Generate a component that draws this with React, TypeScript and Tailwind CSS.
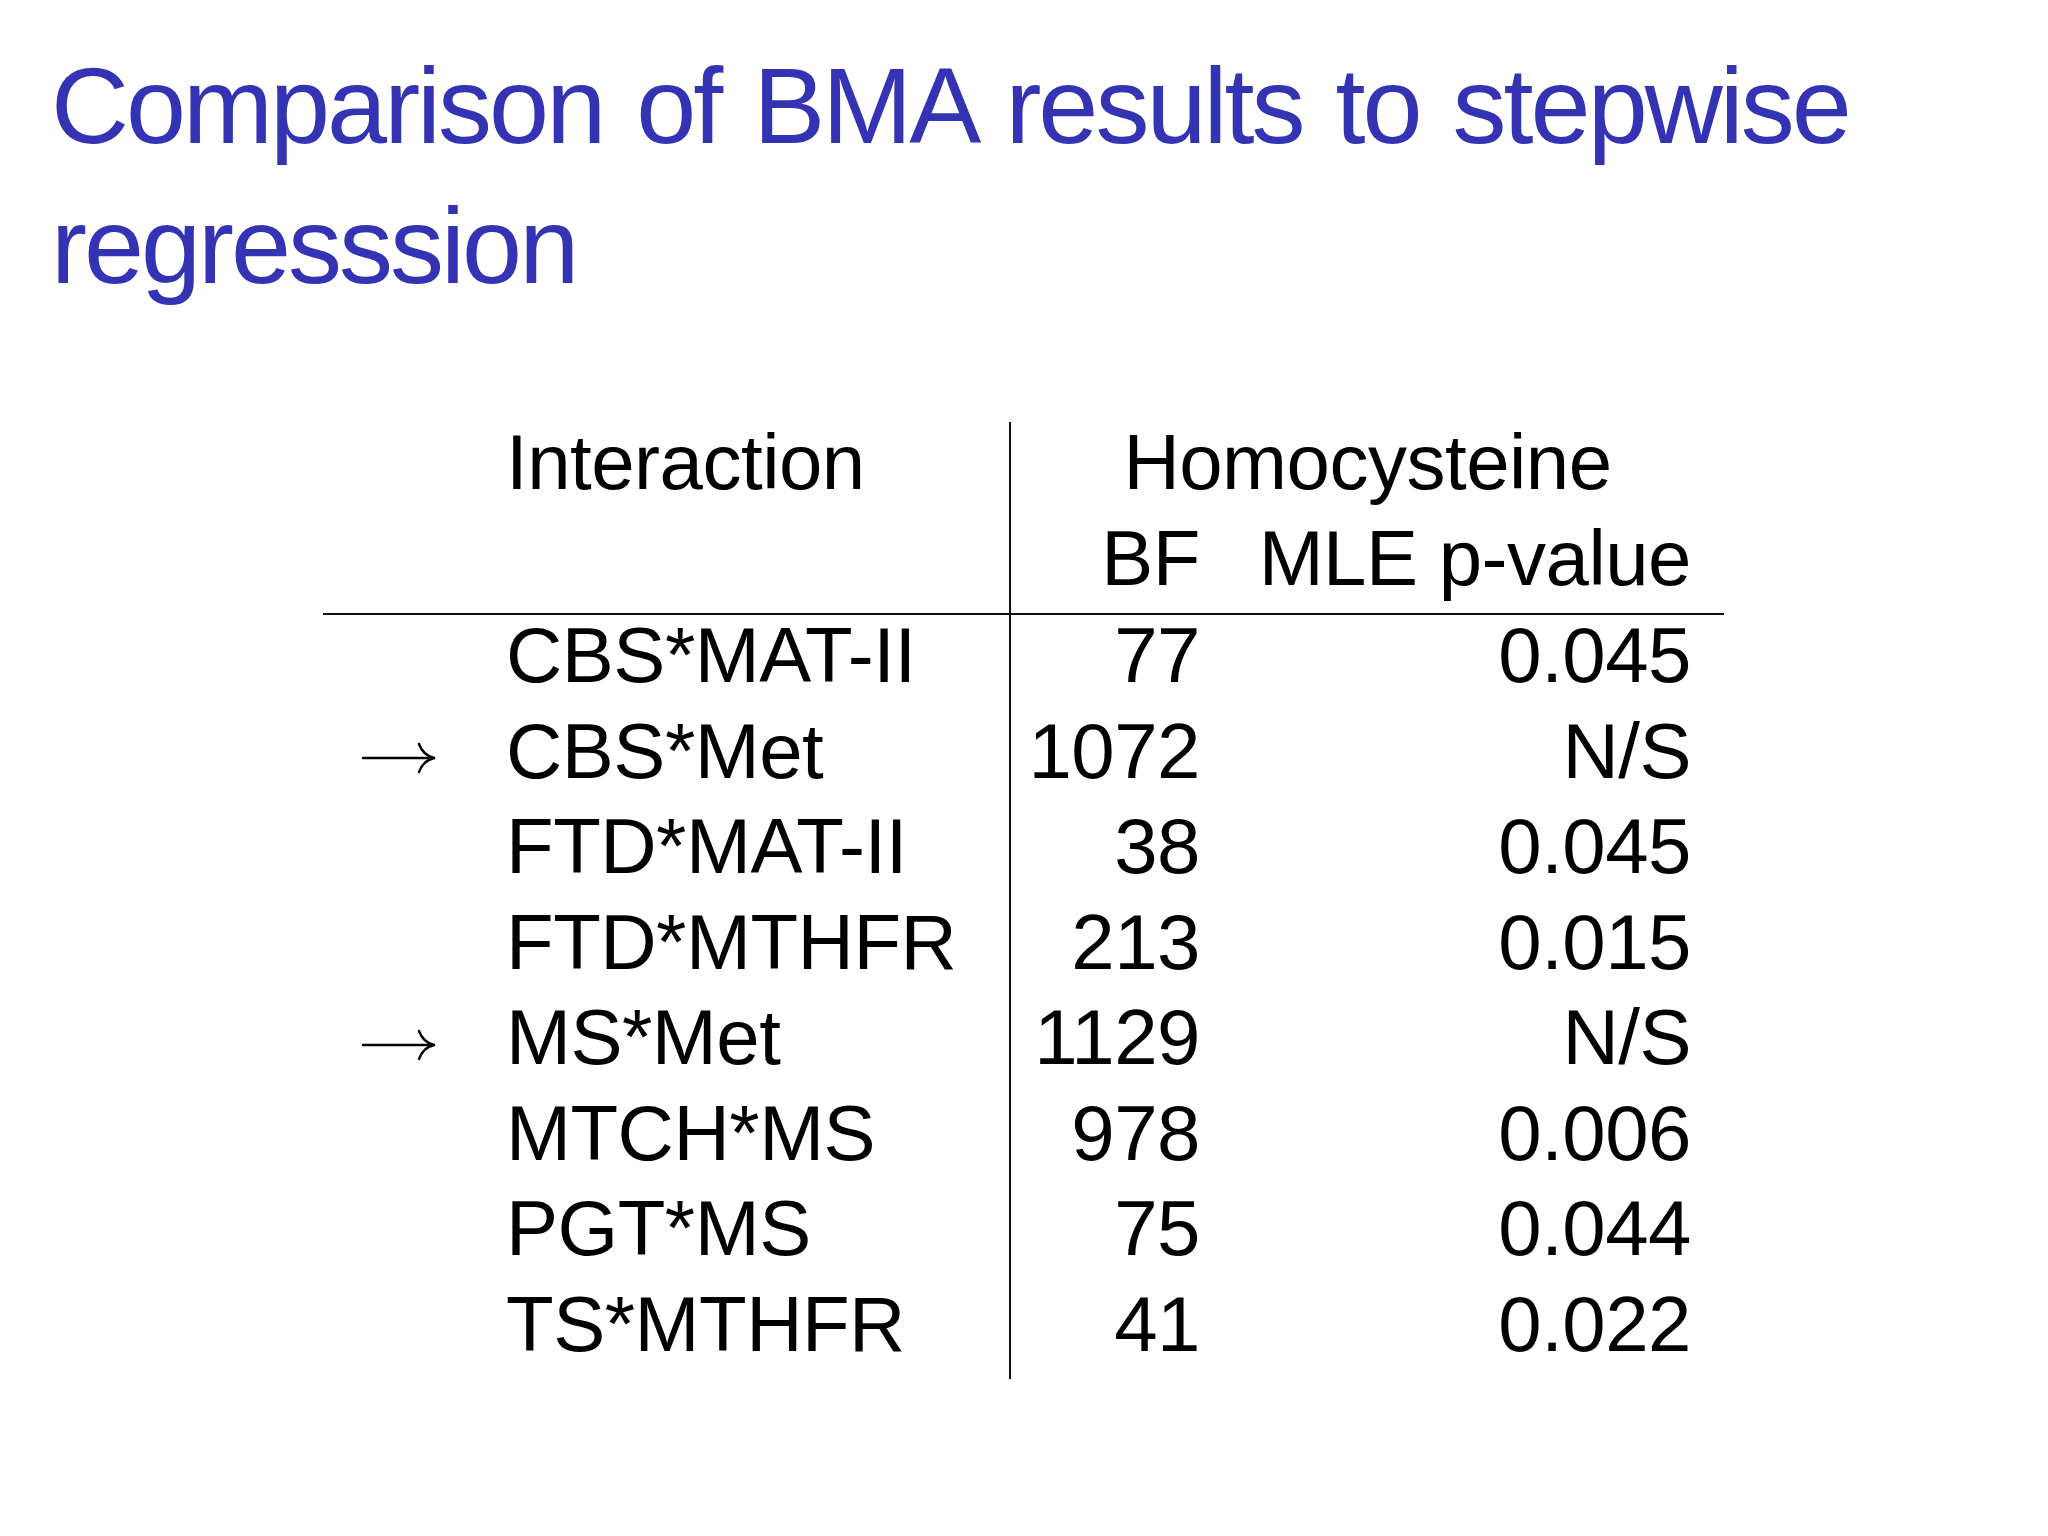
import React from "react";

const rows: { arrow?: boolean; name: string; bf: string; p: string }[] = [
  { name: "CBS*MAT-II", bf: "77", p: "0.045" },
  { arrow: true, name: "CBS*Met", bf: "1072", p: "N/S" },
  { name: "FTD*MAT-II", bf: "38", p: "0.045" },
  { name: "FTD*MTHFR", bf: "213", p: "0.015" },
  { arrow: true, name: "MS*Met", bf: "1129", p: "N/S" },
  { name: "MTCH*MS", bf: "978", p: "0.006" },
  { name: "PGT*MS", bf: "75", p: "0.044" },
  { name: "TS*MTHFR", bf: "41", p: "0.022" },
];

function Arrow() {
  return (
    <svg width="76" height="32" viewBox="0 0 76 32" fill="none" stroke="#000" strokeWidth="2.4" strokeLinecap="round">
      <path d="M3 16H73" />
      <path d="M59 2C61.5 9 66 14 74 16" />
      <path d="M59 30C61.5 23 66 18 74 16" />
    </svg>
  );
}

const cell = "h-[95.5px] leading-[81px] whitespace-nowrap";

export default function App() {
  return (
    <div className="w-[2048px] h-[1536px] bg-white overflow-hidden font-['Liberation_Sans',Arial,sans-serif]">
      <h1 className="w-[1990px] pl-[51px] pt-[36px] text-[108px] leading-[140px] tracking-[-3px] [word-spacing:6px] text-[#3333b3] font-normal">
        Comparison of BMA results to stepwise regresssion
      </h1>
      <div className="ml-[323px] mt-[106px] grid grid-cols-[148px_538px_225px_490px] text-[78px] tracking-[-0.5px] text-black">
        {/* header row 1 */}
        <div className={cell}></div>
        <div className={`${cell} pl-[35px]`}>Interaction</div>
        <div className={`${cell} col-span-2 border-l-2 border-[#111] text-center`}>Homocysteine</div>
        {/* header row 2 */}
        <div className={cell}></div>
        <div className={cell}></div>
        <div className={`${cell} border-l-2 border-[#111] text-right pr-[34px]`}>BF</div>
        <div className={`${cell} text-right pr-[33px]`}>MLE p-value</div>
        {/* rule */}
        <div className="col-span-4 h-[2px] bg-[#111]"></div>
        {rows.map((r) => (
          <React.Fragment key={r.name}>
            <div className={`${cell} pl-[37px] flex items-center`}>{r.arrow ? <Arrow /> : null}</div>
            <div className={`${cell} pl-[35px]`}>{r.name}</div>
            <div className={`${cell} border-l-2 border-[#111] text-right pr-[34px]`}>{r.bf}</div>
            <div className={`${cell} text-right pr-[33px]`}>{r.p}</div>
          </React.Fragment>
        ))}
      </div>
    </div>
  );
}
